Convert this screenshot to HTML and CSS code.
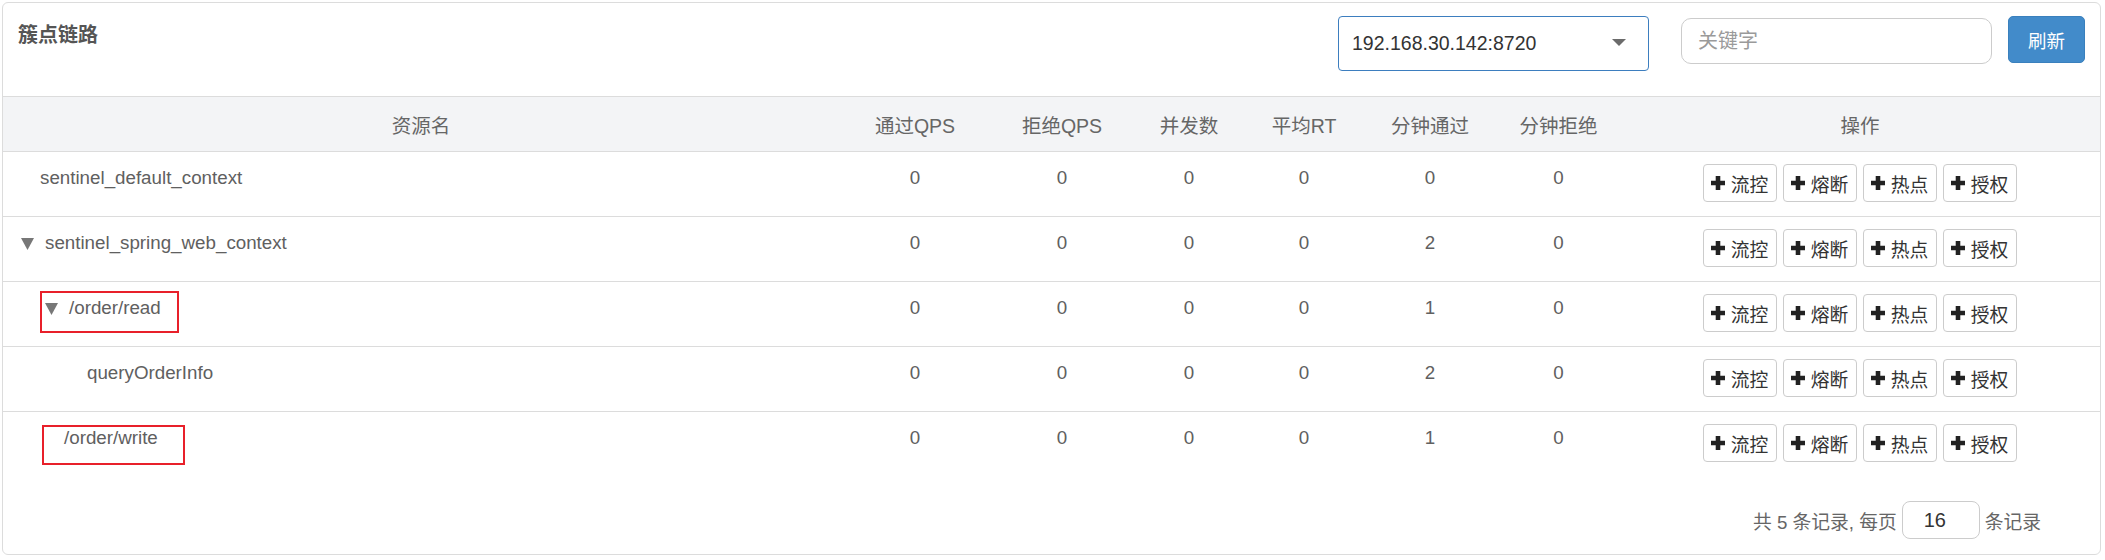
FILE: index.html
```html
<!DOCTYPE html>
<html lang="zh-CN">
<head>
<meta charset="utf-8">
<title>簇点链路</title>
<link rel="stylesheet" href="styles.css">
</head>
<body>
<div class="card">
  <div class="card-head">
    <h3 class="title">簇点链路</h3>
    <div class="tools">
      <div class="select">
        <span>192.168.30.142:8720</span>
        <svg class="caret" width="14" height="7" viewBox="0 0 14 7"><path d="M0 0h14L7 7z" fill="#6b6b6b"/></svg>
      </div>
      <input class="search" type="text" placeholder="关键字">
      <button class="refresh">刷新</button>
    </div>
  </div>

  <div class="grid-row head">
    <div class="cell">资源名</div>
    <div class="cell">通过QPS</div>
    <div class="cell">拒绝QPS</div>
    <div class="cell">并发数</div>
    <div class="cell">平均RT</div>
    <div class="cell">分钟通过</div>
    <div class="cell">分钟拒绝</div>
    <div class="cell">操作</div>
  </div>

  <div class="grid-row body">
    <div class="cell name"><span class="node lvl0"><span class="leaf"></span>sentinel_default_context</span></div>
    <div class="cell num">0</div><div class="cell num">0</div><div class="cell num">0</div><div class="cell num">0</div><div class="cell num">0</div><div class="cell num">0</div>
    <div class="cell acts">
      <button class="act"><svg class="plus" viewBox="0 0 14 14"><path d="M4.7 0h4.6v4.7H14v4.6H9.3V14H4.7V9.3H0V4.7h4.7z"/></svg>流控</button>
      <button class="act"><svg class="plus" viewBox="0 0 14 14"><path d="M4.7 0h4.6v4.7H14v4.6H9.3V14H4.7V9.3H0V4.7h4.7z"/></svg>熔断</button>
      <button class="act"><svg class="plus" viewBox="0 0 14 14"><path d="M4.7 0h4.6v4.7H14v4.6H9.3V14H4.7V9.3H0V4.7h4.7z"/></svg>热点</button>
      <button class="act"><svg class="plus" viewBox="0 0 14 14"><path d="M4.7 0h4.6v4.7H14v4.6H9.3V14H4.7V9.3H0V4.7h4.7z"/></svg>授权</button>
    </div>
  </div>

  <div class="grid-row body">
    <div class="cell name"><span class="node lvl0"><svg class="toggle" viewBox="0 0 13 12"><path d="M0 0h13L6.5 12z"/></svg>sentinel_spring_web_context</span></div>
    <div class="cell num">0</div><div class="cell num">0</div><div class="cell num">0</div><div class="cell num">0</div><div class="cell num">2</div><div class="cell num">0</div>
    <div class="cell acts">
      <button class="act"><svg class="plus" viewBox="0 0 14 14"><path d="M4.7 0h4.6v4.7H14v4.6H9.3V14H4.7V9.3H0V4.7h4.7z"/></svg>流控</button>
      <button class="act"><svg class="plus" viewBox="0 0 14 14"><path d="M4.7 0h4.6v4.7H14v4.6H9.3V14H4.7V9.3H0V4.7h4.7z"/></svg>熔断</button>
      <button class="act"><svg class="plus" viewBox="0 0 14 14"><path d="M4.7 0h4.6v4.7H14v4.6H9.3V14H4.7V9.3H0V4.7h4.7z"/></svg>热点</button>
      <button class="act"><svg class="plus" viewBox="0 0 14 14"><path d="M4.7 0h4.6v4.7H14v4.6H9.3V14H4.7V9.3H0V4.7h4.7z"/></svg>授权</button>
    </div>
  </div>

  <div class="grid-row body">
    <div class="cell name"><span class="node lvl1"><svg class="toggle" viewBox="0 0 13 12"><path d="M0 0h13L6.5 12z"/></svg>/order/read</span><span class="mark mark-read"></span></div>
    <div class="cell num">0</div><div class="cell num">0</div><div class="cell num">0</div><div class="cell num">0</div><div class="cell num">1</div><div class="cell num">0</div>
    <div class="cell acts">
      <button class="act"><svg class="plus" viewBox="0 0 14 14"><path d="M4.7 0h4.6v4.7H14v4.6H9.3V14H4.7V9.3H0V4.7h4.7z"/></svg>流控</button>
      <button class="act"><svg class="plus" viewBox="0 0 14 14"><path d="M4.7 0h4.6v4.7H14v4.6H9.3V14H4.7V9.3H0V4.7h4.7z"/></svg>熔断</button>
      <button class="act"><svg class="plus" viewBox="0 0 14 14"><path d="M4.7 0h4.6v4.7H14v4.6H9.3V14H4.7V9.3H0V4.7h4.7z"/></svg>热点</button>
      <button class="act"><svg class="plus" viewBox="0 0 14 14"><path d="M4.7 0h4.6v4.7H14v4.6H9.3V14H4.7V9.3H0V4.7h4.7z"/></svg>授权</button>
    </div>
  </div>

  <div class="grid-row body">
    <div class="cell name"><span class="node lvl2"><span class="leaf"></span>queryOrderInfo</span></div>
    <div class="cell num">0</div><div class="cell num">0</div><div class="cell num">0</div><div class="cell num">0</div><div class="cell num">2</div><div class="cell num">0</div>
    <div class="cell acts">
      <button class="act"><svg class="plus" viewBox="0 0 14 14"><path d="M4.7 0h4.6v4.7H14v4.6H9.3V14H4.7V9.3H0V4.7h4.7z"/></svg>流控</button>
      <button class="act"><svg class="plus" viewBox="0 0 14 14"><path d="M4.7 0h4.6v4.7H14v4.6H9.3V14H4.7V9.3H0V4.7h4.7z"/></svg>熔断</button>
      <button class="act"><svg class="plus" viewBox="0 0 14 14"><path d="M4.7 0h4.6v4.7H14v4.6H9.3V14H4.7V9.3H0V4.7h4.7z"/></svg>热点</button>
      <button class="act"><svg class="plus" viewBox="0 0 14 14"><path d="M4.7 0h4.6v4.7H14v4.6H9.3V14H4.7V9.3H0V4.7h4.7z"/></svg>授权</button>
    </div>
  </div>

  <div class="grid-row body last">
    <div class="cell name"><span class="node lvl1"><span class="leaf"></span>/order/write</span><span class="mark mark-write"></span></div>
    <div class="cell num">0</div><div class="cell num">0</div><div class="cell num">0</div><div class="cell num">0</div><div class="cell num">1</div><div class="cell num">0</div>
    <div class="cell acts">
      <button class="act"><svg class="plus" viewBox="0 0 14 14"><path d="M4.7 0h4.6v4.7H14v4.6H9.3V14H4.7V9.3H0V4.7h4.7z"/></svg>流控</button>
      <button class="act"><svg class="plus" viewBox="0 0 14 14"><path d="M4.7 0h4.6v4.7H14v4.6H9.3V14H4.7V9.3H0V4.7h4.7z"/></svg>熔断</button>
      <button class="act"><svg class="plus" viewBox="0 0 14 14"><path d="M4.7 0h4.6v4.7H14v4.6H9.3V14H4.7V9.3H0V4.7h4.7z"/></svg>热点</button>
      <button class="act"><svg class="plus" viewBox="0 0 14 14"><path d="M4.7 0h4.6v4.7H14v4.6H9.3V14H4.7V9.3H0V4.7h4.7z"/></svg>授权</button>
    </div>
  </div>

  <div class="pager">
    <span>共 5 条记录, 每页</span>
    <input class="page-size" type="text" value="16">
    <span>条记录</span>
  </div>
</div>
</body>
</html>
```

FILE: styles.css
```css
* {
  box-sizing: border-box;
}

body {
  margin: 0;
  background: #fff;
  font-family: "Liberation Sans", "Noto Sans CJK SC", sans-serif;
  color: #606060;
}

.card {
  margin: 2px 0 0 2px;
  width: 2099px;
  border: 1px solid #dcdcdc;
  border-radius: 6px;
  background: #fff;
}

/* ---------- head ---------- */
.card-head {
  height: 93px;
  display: flex;
  justify-content: space-between;
  align-items: flex-start;
  padding: 0 15px;
}

.title {
  margin: 18px 0 0 0;
  font-size: 20px;
  line-height: 28px;
  font-weight: bold;
  color: #555;
}

.tools {
  display: flex;
  align-items: flex-start;
}

.select {
  margin-top: 13px;
  width: 311px;
  height: 55px;
  border: 1px solid #3d7ebf;
  border-radius: 4px;
  display: flex;
  align-items: center;
  justify-content: space-between;
  padding: 0 22px 0 13px;
  font-size: 19.5px;
  color: #333;
}

.caret {
  display: block;
  margin-top: -2px;
}

.search {
  margin: 15px 0 0 32px;
  width: 311px;
  height: 46px;
  border: 1px solid #ccc;
  border-radius: 10px;
  padding: 0 16px;
  font-family: "Liberation Sans", "Noto Sans CJK SC", sans-serif;
  font-size: 20px;
  color: #333;
  outline: none;
}

.search::placeholder {
  color: #9a9a9a;
}

.refresh {
  margin: 13px 0 0 16px;
  width: 77px;
  height: 47px;
  background: #428bca;
  border: 1px solid #3a80bd;
  border-radius: 5px;
  color: #fff;
  font-family: "Liberation Sans", "Noto Sans CJK SC", sans-serif;
  font-size: 18.5px;
  padding: 0;
}

/* ---------- grid ---------- */
.grid-row {
  display: grid;
  grid-template-columns: 836px 152px 142px 112px 118px 134px 123px 1fr;
}

.grid-row.head {
  height: 56px;
  background: #f3f4f6;
  border-top: 1px solid #dcdcdc;
  border-bottom: 1px solid #dcdcdc;
}

.grid-row.head .cell {
  display: flex;
  align-items: center;
  justify-content: center;
  font-size: 19.5px;
  color: #666;
}

.grid-row.body {
  height: 65px;
  border-bottom: 1px solid #dcdcdc;
  font-size: 18.76px;
  line-height: 27px;
}

.grid-row.body.last {
  border-bottom: none;
}

.grid-row.body .cell {
  padding-top: 12px;
}

.cell.num {
  text-align: center;
}

.cell.name {
  position: relative;
  padding-left: 18px;
  white-space: nowrap;
}

.node {
  display: inline-block;
}

.node.lvl1 {
  margin-left: 24px;
}

.node.lvl2 {
  margin-left: 47px;
}

.toggle {
  display: inline-block;
  width: 13px;
  height: 12px;
  margin-right: 11px;
  vertical-align: -1px;
  fill: #777;
}

.leaf {
  display: inline-block;
  width: 19px;
}

/* annotation boxes drawn over the names */
.mark {
  position: absolute;
  border: 2px solid #e8202a;
}

.mark-read {
  left: 37px;
  top: 9px;
  width: 139px;
  height: 42px;
}

.mark-write {
  left: 39px;
  top: 13px;
  width: 143px;
  height: 40px;
}

/* ---------- actions ---------- */
.cell.acts {
  display: flex;
  justify-content: center;
  align-items: flex-start;
  gap: 5.5px;
}

.act {
  display: inline-flex;
  align-items: center;
  gap: 6px;
  height: 38px;
  padding: 0 8px 0 7px;
  border: 1px solid #ccc;
  border-radius: 4px;
  background: #fff;
  color: #333;
  font-family: "Liberation Sans", "Noto Sans CJK SC", sans-serif;
  font-size: 18.76px;
}

.plus {
  width: 14px;
  height: 14px;
  fill: #222;
}

/* ---------- pager ---------- */
.pager {
  display: flex;
  justify-content: flex-end;
  align-items: center;
  gap: 5px;
  padding: 24px 59px 15px 0;
  font-size: 18.76px;
  color: #666;
}

.page-size {
  width: 78px;
  height: 38px;
  border: 1px solid #ccc;
  border-radius: 8px;
  padding: 0 0 0 21px;
  font-family: "Liberation Sans", "Noto Sans CJK SC", sans-serif;
  font-size: 20px;
  color: #333;
  outline: none;
}
```
